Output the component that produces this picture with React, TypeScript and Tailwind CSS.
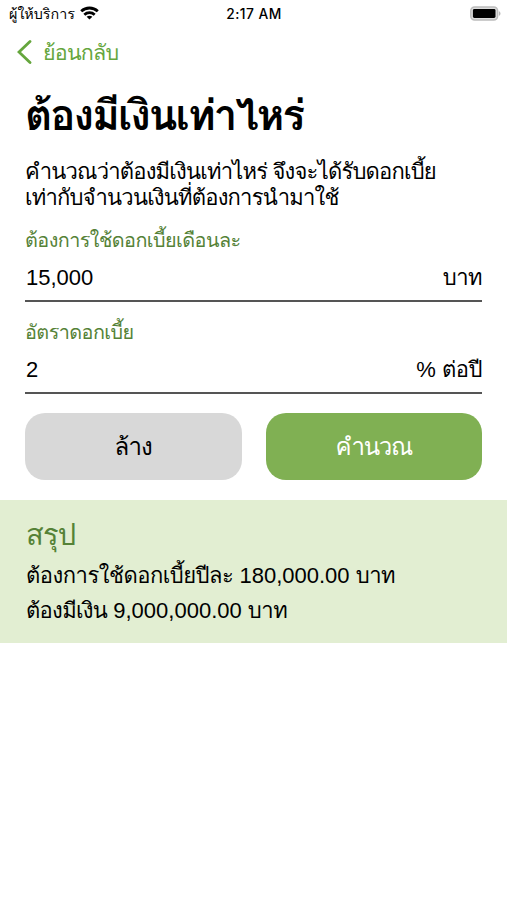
import type { ReactNode } from 'react';

function WifiIcon() {
  return (
    <svg width="19" height="14" viewBox="0 0 19 14" className="relative -top-px ml-[5px] shrink-0">
      <g fill="none" stroke="#000" strokeWidth="2.8">
        <path d="M1.2 5.3C5.9 .9 13.1 .9 17.8 5.3" />
        <path d="M4.3 8.7C7.3 6 11.7 6 14.7 8.7" />
      </g>
      <path d="M9.5 13.6 6.6 10.8C8.3 9.4 10.7 9.4 12.4 10.8Z" fill="#000" />
    </svg>
  );
}

function BatteryIcon() {
  return (
    <svg width="31" height="15" viewBox="0 0 31 15" className="shrink-0">
      <rect x=".8" y=".9" width="26.8" height="13.2" rx="3.8" fill="#ddd" stroke="#bcbcbc" strokeWidth="1.5" />
      <rect x="2.9" y="3" width="22.6" height="9" rx="1.4" fill="#000" />
      <path d="M28.9 5.2C31 5.9 31 9.1 28.9 9.8Z" fill="#b8b8b8" />
    </svg>
  );
}

function Thai({ children }: { children: ReactNode }) {
  return <span className="tracking-[-0.5px]">{children}</span>;
}

function Field({ label, value, unit, className }: { label: string; value: string; unit: ReactNode; className: string }) {
  return (
    <div className={className}>
      <div className="h-6 text-[19.8px] leading-[25px] tracking-[-0.55px] text-[#558237]">{label}</div>
      <div className="mt-3 flex h-[25px] justify-between text-[22px] leading-[27px]">
        <span className="pl-px">{value}</span>
        <span>{unit}</span>
      </div>
      <div className="mt-[11px] h-[2px] bg-[#555]" />
    </div>
  );
}

export default function App() {
  return (
    <div className="h-[900px] w-[507px] overflow-hidden whitespace-nowrap bg-white font-['Liberation_Sans',Loma,sans-serif] text-black">
      <header className="grid h-[27px] grid-cols-3 items-center pl-[9px] pr-[6px]">
        <div className="flex items-center text-[14.3px] leading-5">
          <span>ผู้ให้บริการ</span>
          <WifiIcon />
        </div>
        <div className="pr-[2px] text-center font-['Inter',sans-serif] text-[13.8px] font-medium leading-5 tracking-[0.45px]">2:17 AM</div>
        <div className="flex justify-end">
          <BatteryIcon />
        </div>
      </header>
      <nav className="flex h-[50px] items-center pl-[17px] text-[21.5px] leading-[30px] text-[#65a63d]">
        <svg width="15" height="24" viewBox="0 0 15 24" className="mr-[11px]">
          <path d="M13 1.5 2 12 13 22.5" fill="none" stroke="currentColor" strokeWidth="2.8" strokeLinecap="round" />
        </svg>
        <span className="pt-px tracking-[-0.8px]">ย้อนกลับ</span>
      </nav>
      <main className="px-[25px]">
        <h1 className="mt-3 h-[52px] text-[42px] font-bold leading-[54px] tracking-[-1.95px]">ต้องมีเงินเท่าไหร่</h1>
        <p className="mt-[18px] text-[22px] leading-[26px] tracking-[-0.8px]">
          คำนวณว่าต้องมีเงินเท่าไหร่ จึงจะได้รับดอกเบี้ย
          <br />
          เท่ากับจำนวนเงินที่ต้องการนำมาใช้
        </p>
        <Field className="mt-[17px]" label="ต้องการใช้ดอกเบี้ยเดือนละ" value="15,000" unit={<Thai>บาท</Thai>} />
        <Field className="mt-[18px]" label="อัตราดอกเบี้ย" value="2" unit={<>% <Thai>ต่อปี</Thai></>} />
        <div className="mt-[19px] grid grid-cols-2 gap-6 text-[24px] leading-[30px]">
          <button className="h-[67px] rounded-[20px] bg-[#d8d8d8] tracking-[-0.8px]">ล้าง</button>
          <button className="h-[67px] rounded-[20px] bg-[#80b053] tracking-[-1.3px] text-white">คำนวณ</button>
        </div>
      </main>
      <section className="mt-5 h-[143px] bg-[#e2eed2] px-[26px] pt-4 text-[22px]">
        <h2 className="h-[42px] text-[29px] leading-[39px] tracking-[-0.8px] text-[#558237]">สรุป</h2>
        <p className="leading-[35px]"><Thai>ต้องการใช้ดอกเบี้ยปีละ</Thai> 180,000.00 <Thai>บาท</Thai></p>
        <p className="leading-[35px]"><span className="tracking-[-0.7px]">ต้องมีเงิน</span> 9,000,000.00 <Thai>บาท</Thai></p>
      </section>
    </div>
  );
}
